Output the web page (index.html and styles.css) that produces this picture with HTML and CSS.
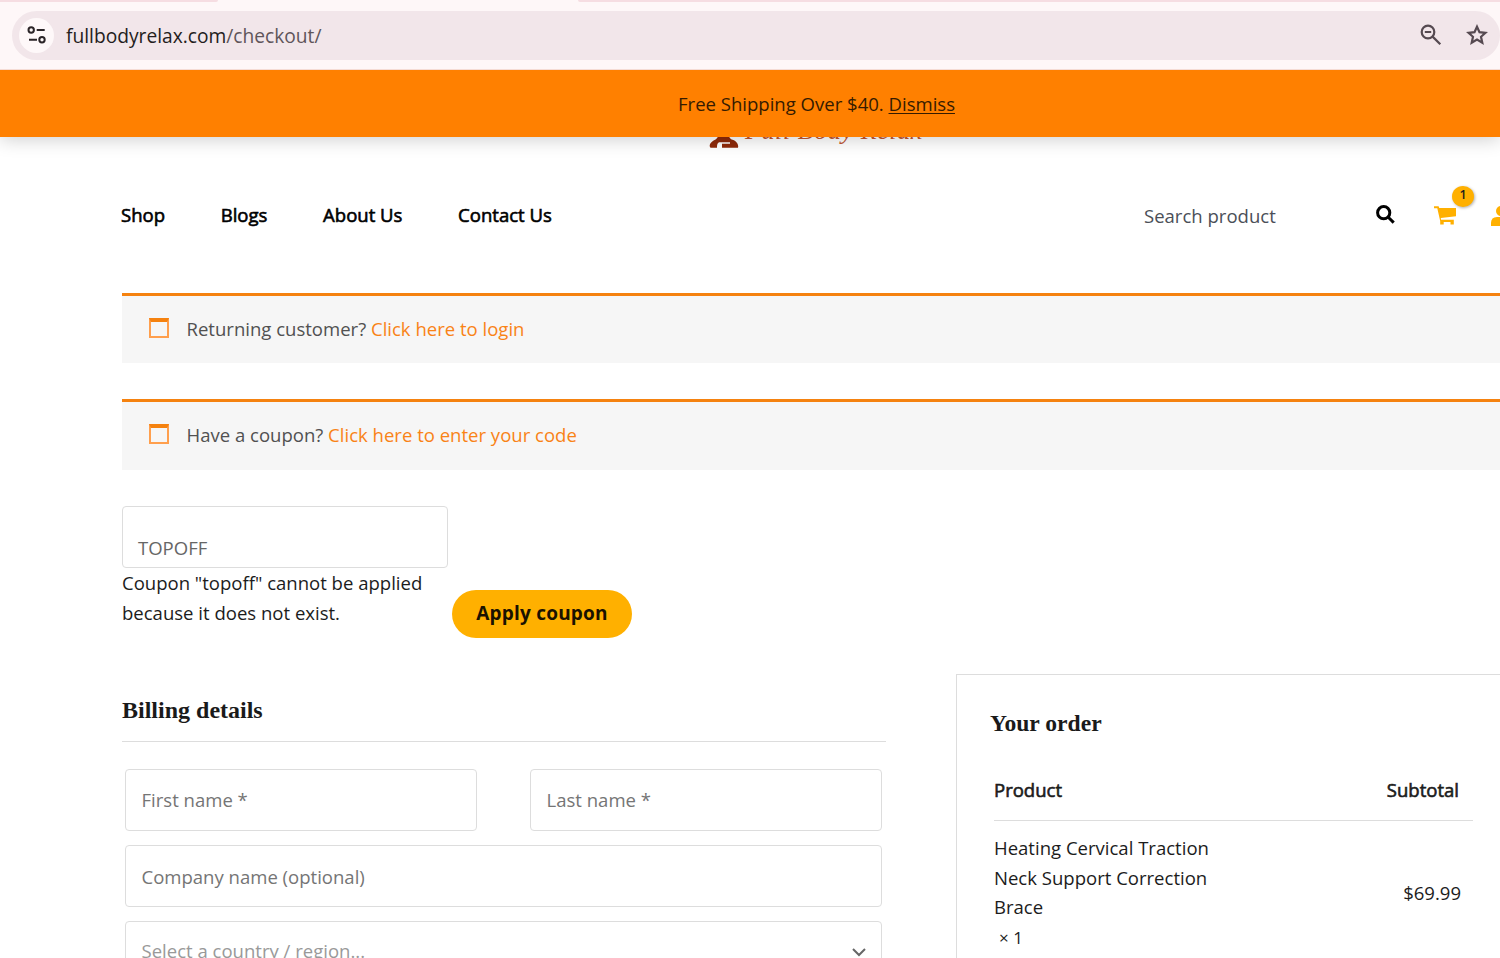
FILE: index.html
```
<!DOCTYPE html>
<html lang="en">
<head>
    <meta charset="UTF-8">
    <meta name="viewport" content="width=device-width, initial-scale=1">
    <title>Checkout</title>
    <link rel="stylesheet" href="styles.css">
</head>
<body>
    <div class="browser">
        <div class="tabs"><i class="tab-left"></i><i class="tab-right"></i></div>
        <div class="address">
            <span class="site-info">
                <svg width="20" height="20" viewBox="0 0 20 20" fill="none" stroke="#2b2528" stroke-width="2">
                    <circle cx="4.2" cy="5" r="2.7"/>
                    <path d="M9.7 5h8M2 14.8h8"/>
                    <circle cx="15" cy="14.8" r="2.7"/>
                </svg>
            </span>
            <span class="url">fullbodyrelax.com<em>/checkout/</em></span>
            <svg class="zoom-out" width="22" height="22" viewBox="0 0 22 22" fill="none" stroke="#564a51" stroke-width="2.2">
                <circle cx="8" cy="8" r="6.3"/>
                <path d="M4.8 8h6.4M12.6 12.6l7.7 7.7"/>
            </svg>
            <svg class="star" width="22" height="21" viewBox="0 0 22 21" fill="none" stroke="#564a51" stroke-width="2.2">
                <path d="M11 2.7l2.5 5.5 6 .6-4.5 4 1.3 5.9L11 15.6l-5.3 3.1L7 12.8l-4.5-4 6-.6z"/>
            </svg>
        </div>
    </div>

    <div class="store-notice">
        <p>Free Shipping Over $40. <a href="#">Dismiss</a></p>
    </div>

    <header class="header">
        <div class="logo">
            <svg width="30" height="24" viewBox="0 0 30 24" fill="#8f2a0a">
                <path d="M1.5 23.7c-2-2-.5-6 5.5-8.500l4-5h7l4 5c5 1 8 5 7 8.500H13v-4h8v-1.500H10c-2 1-2 3-2 5.500z"/>
            </svg>
            <span>Full Body Relax</span>
        </div>
        <div class="header-row">
            <nav class="nav">
                <a href="#">Shop</a>
                <a href="#">Blogs</a>
                <a href="#">About Us</a>
                <a href="#">Contact Us</a>
            </nav>
            <div class="tools">
                <span class="search-text">Search product</span>
                <svg class="search" width="19" height="19" viewBox="0 0 19 19" fill="none" stroke="#000" stroke-width="3">
                    <circle cx="7.7" cy="7.7" r="6.1"/>
                    <path d="M12 12l5.7 5.6"/>
                </svg>
                <span class="cart">
                    <svg width="22" height="19" viewBox="0 0 22 19" fill="#ffb000">
                        <path d="M0 .3h4.600L5.300 2H22v8.200L6.800 12l.2 1.800h12.800v4.700h-3.300v-2.400H9.700v2.400H6.200v-3.600L3.300 2.200H0z"/>
                    </svg>
                    <b class="count">1</b>
                </span>
                <svg class="user" width="20" height="20" viewBox="0 0 20 20" fill="#ffb000">
                    <circle cx="10" cy="5" r="5"/>
                    <path d="M0 20v-3q0-6 6-6h8q6 0 6 6v3z"/>
                </svg>
            </div>
        </div>
    </header>

    <main class="content">
        <div class="info">
            <i class="info-icon"></i>
            <p>Returning customer? <a href="#">Click here to login</a></p>
        </div>
        <div class="info info-coupon">
            <i class="info-icon"></i>
            <p>Have a coupon? <a href="#">Click here to enter your code</a></p>
        </div>

        <form class="coupon">
            <div class="coupon-left">
                <div class="coupon-input">TOPOFF</div>
                <p class="coupon-error">Coupon "topoff" cannot be applied<br>because it does not exist.</p>
            </div>
            <button type="button" class="apply">Apply coupon</button>
        </form>

        <div class="checkout">
            <section class="billing">
                <h3>Billing details</h3>
                <div class="fields">
                    <div class="field">First name *</div>
                    <div class="field">Last name *</div>
                    <div class="field wide company">Company name (optional)</div>
                    <div class="field wide country">
                        <span>Select a country / region...</span>
                        <svg width="14" height="9" viewBox="0 0 14 9" fill="none" stroke="#666" stroke-width="2">
                            <path d="M1 1l6 6 6-6"/>
                        </svg>
                    </div>
                </div>
            </section>

            <section class="order">
                <h3>Your order</h3>
                <div class="order-head">
                    <span>Product</span>
                    <span>Subtotal</span>
                </div>
                <div class="order-item">
                    <p>Heating Cervical Traction<br>Neck Support Correction<br>Brace<br><span class="qty">× 1</span></p>
                    <span class="price">$69.99</span>
                </div>
            </section>
        </div>
    </main>
</body>
</html>
```
FILE: styles.css
```
*{
    margin: 0;
    padding: 0;
    box-sizing: border-box;
}
body{
    width: 1500px;
    height: 958px;
    overflow: hidden;
    background-color: #ffffff;
    font-family: "Open Sans", "Liberation Sans", sans-serif;
    font-size: 18.55px;
    color: #1c1c1c;
}
a{
    color: inherit;
    text-decoration: none;
}
svg{
    display: block;
    flex: none;
}
.browser{
    position: relative;
    z-index: 3;
    height: 70px;
    background-color: #fef7f8;
    border-bottom: 1px solid #f5dcd5;
}
.tabs{
    height: 11px;
    display: flex;
    justify-content: space-between;
}
.tabs i{
    height: 2px;
    background-color: #f6dde2;
}
.tab-left{
    width: 218px;
    border-bottom-right-radius: 2px;
}
.tab-right{
    width: 922px;
    border-bottom-left-radius: 2px;
}
.address{
    height: 49px;
    margin-left: 12px;
    padding: 0 0 1px 7px;
    border-radius: 25px;
    background-color: #f2e6ea;
    display: flex;
    align-items: center;
}
.site-info{
    width: 35px;
    height: 35px;
    border-radius: 50%;
    background-color: #fef8f9;
    display: flex;
    align-items: center;
    justify-content: center;
}
.url{
    margin-left: 12px;
    flex: 1;
    font-size: 19.2px;
    color: #241d20;
}
.url em{
    font-style: normal;
    color: #5f555a;
}
.zoom-out{
    margin-right: 24px;
}
.star{
    margin: 0 12px 1px 0;
}
.store-notice{
    position: relative;
    z-index: 2;
    height: 67px;
    padding-left: 133px;
    line-height: 67px;
    text-align: center;
    background-color: #ff8000;
    color: #351b00;
    box-shadow: 0 2px 18px rgba(0,0,0,0.2);
}
.store-notice a{
    text-decoration: underline;
    text-underline-offset: 2px;
    text-decoration-thickness: 1px;
}
.header{
    display: flow-root;
    height: 156px;
}
/* the notice bar covers the upper part of the logo */
.logo{
    height: 24px;
    margin: -13px 0 0 709px;
    display: flex;
    align-items: flex-end;
    gap: 6px;
}
.logo span{
    font-family: "Liberation Serif", serif;
    font-style: italic;
    font-size: 26px;
    line-height: 34px;
    letter-spacing: 0.6px;
    color: #bf5632;
    white-space: nowrap;
}
.header-row{
    height: 134px;
    padding-left: 121px;
    display: flex;
    align-items: center;
}
.nav{
    display: flex;
    flex: 1;
    gap: 55.7px;
    padding-bottom: 1px;
    color: #000000;
    -webkit-text-stroke: 0.6px #000000;
}
.tools{
    display: flex;
    align-items: center;
    width: 356px;
    flex: none;
}
.search-text{
    width: 232px;
    flex: none;
    color: #4b4f58;
}
.search{
    margin-bottom: 2px;
}
.cart{
    position: relative;
    margin-left: 39px;
}
.count{
    position: absolute;
    left: 18px;
    top: -20px;
    width: 22px;
    height: 21px;
    border-radius: 50%;
    background-color: #ffb000;
    box-shadow: 1px 1px 3px rgba(0,0,0,0.3);
    font-size: 12.5px;
    font-weight: 600;
    line-height: 18px;
    text-align: center;
}
.user{
    margin: 2px 0 0 35px;
}
.content{
    padding-left: 122px;
}
.info{
    height: 70px;
    border-top: 3px solid #f5820f;
    background-color: #f6f6f6;
    padding: 0 0 3px 27px;
    display: flex;
    align-items: center;
    color: #515151;
}
.info a{
    color: #f98316;
}
.info-coupon{
    height: 71px;
    margin-top: 36px;
    padding-bottom: 4px;
}
.info-icon{
    width: 20px;
    height: 20px;
    margin: 0 17.5px 1px 0;
    border: 2px solid #ff9f4d;
    border-top: 4px solid #f5820f;
}
.coupon{
    margin-top: 36px;
    height: 132px;
    display: flex;
    align-items: flex-end;
}
.coupon-left{
    width: 326px;
    height: 132px;
    margin-right: 4px;
}
.coupon-input{
    height: 62px;
    border: 1px solid #dddddd;
    border-radius: 4px;
    padding: 28px 15px 0;
    line-height: 25px;
    color: #666666;
}
.coupon-error{
    line-height: 30px;
}
.apply{
    width: 180px;
    height: 48px;
    border: 0;
    border-radius: 24px;
    padding-bottom: 3px;
    background-color: #ffb000;
    font-family: "Open Sans", sans-serif;
    font-weight: bold;
    font-size: 19px;
    letter-spacing: 0.2px;
    color: #1a1200;
}
.checkout{
    display: flex;
    align-items: flex-start;
    margin-top: 35px;
}
h3{
    font-family: "Liberation Serif", serif;
    font-size: 24px;
    line-height: 27px;
    color: #1a1a1a;
}
.billing{
    width: 765px;
    margin-right: 69px;
}
.billing h3{
    height: 69px;
    padding-top: 24px;
    border-bottom: 1px solid #dddddd;
}
.fields{
    margin: 27px 4px 0 3px;
    display: grid;
    grid-template-columns: 352px 352px;
    justify-content: space-between;
}
.field{
    height: 62px;
    border: 1px solid #dddddd;
    border-radius: 4px;
    padding: 0 15.5px;
    line-height: 60px;
    color: #757575;
}
.wide{
    grid-column: 1 / 3;
}
.company{
    margin-top: 14px;
    line-height: 62px;
}
.country{
    margin-top: 14px;
    padding-right: 15px;
    line-height: 57px;
    color: #999999;
    display: flex;
    align-items: center;
    justify-content: space-between;
}
.country span{
    height: 60px;
}
.order{
    width: 544px;
    height: 300px;
    flex: none;
    border: 1px solid #dddddd;
    border-right: 0;
    border-bottom: 0;
    margin: 1px 0 0 1px;
    padding: 35px 27px 0 33px;
}
.order h3{
    font-size: 23.6px;
}
.order-head{
    margin: 40px 0 0 4px;
    padding-right: 14px;
    height: 44px;
    border-bottom: 1px solid #dddddd;
    display: flex;
    justify-content: space-between;
    -webkit-text-stroke: 0.6px #1c1c1c;
}
.order-item{
    margin-left: 4px;
    padding: 12px 12px 0 0;
    display: flex;
    align-items: center;
    justify-content: space-between;
    line-height: 29.7px;
}
.price{
    margin-bottom: 1px;
}
.qty{
    margin-left: 5px;
    font-size: 17px;
}
```
